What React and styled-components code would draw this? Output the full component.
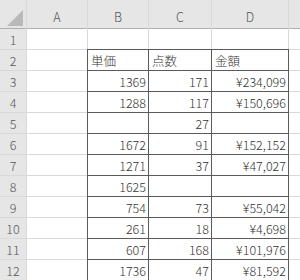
import React from "react";
import styled, { createGlobalStyle } from "styled-components";

const Global = createGlobalStyle`
  html, body { margin: 0; padding: 0; background: #fff; }
  body { width: 300px; height: 280px; overflow: hidden; }
`;

const Sheet = styled.div`
  display: grid;
  grid-template-columns: 26px 60px 60px 62px 76px 1fr;
  grid-template-rows: 28px repeat(12, 20px);
  gap: 1px;
  background: #d9d9d9;
  width: 300px;
  height: 280px;
  overflow: hidden;
  font-family: "Noto Sans CJK JP", "Noto Sans", sans-serif;
  font-size: 12.5px;
  font-weight: 300;
`;

const Corner = styled.div`
  background: #e6e6e6;
  position: relative;
  box-shadow: 0 1px 0 #b0b0b0;
`;

const Triangle = styled.svg`
  position: absolute;
  right: 3px;
  bottom: 2px;
`;

const ColHead = styled.div`
  background: #e6e6e6;
  color: #555;
  display: flex;
  align-items: center;
  justify-content: center;
  padding-top: 4px;
  box-shadow: 0 1px 0 #b0b0b0;
`;

const RowHead = styled.div`
  background: #e6e6e6;
  color: #555;
  display: flex;
  align-items: center;
  justify-content: center;
`;

const Cell = styled.div`
  background: #fff;
  color: #333;
  display: flex;
  align-items: center;
  justify-content: ${(p) => (p.$align === "right" ? "flex-end" : "flex-start")};
  padding: 0 2px 0 3px;
  white-space: nowrap;
  overflow: hidden;
  box-shadow: ${(p) => (p.$boxed ? "0 0 0 1px #5a5a5a" : "none")};
  position: relative;
  z-index: ${(p) => (p.$boxed ? 1 : 0)};
`;

const cols = ["A", "B", "C", "D", ""];

const rows = [
  ["", "", "", ""],
  ["", "単価", "点数", "金額"],
  ["", "1369", "171", "¥234,099"],
  ["", "1288", "117", "¥150,696"],
  ["", "", "27", ""],
  ["", "1672", "91", "¥152,152"],
  ["", "1271", "37", "¥47,027"],
  ["", "1625", "", ""],
  ["", "754", "73", "¥55,042"],
  ["", "261", "18", "¥4,698"],
  ["", "607", "168", "¥101,976"],
  ["", "1736", "47", "¥81,592"],
];

export default function App() {
  return (
    <>
      <Global />
      <Sheet>
        <Corner>
          <Triangle width="16" height="16" viewBox="0 0 16 16">
            <polygon points="16,0 16,16 0,16" fill="#b9b9b9" />
          </Triangle>
        </Corner>
        {cols.map((c, i) => (
          <ColHead key={"h" + i}>{c}</ColHead>
        ))}
        {rows.map((r, ri) => (
          <React.Fragment key={ri}>
            <RowHead>{ri + 1}</RowHead>
            {r.map((v, ci) => {
              const boxed = ri >= 1 && ci >= 1;
              const align = ri >= 2 ? "right" : "left";
              return (
                <Cell key={ci} $boxed={boxed} $align={align}>
                  {v}
                </Cell>
              );
            })}
            <Cell />
          </React.Fragment>
        ))}
      </Sheet>
    </>
  );
}
